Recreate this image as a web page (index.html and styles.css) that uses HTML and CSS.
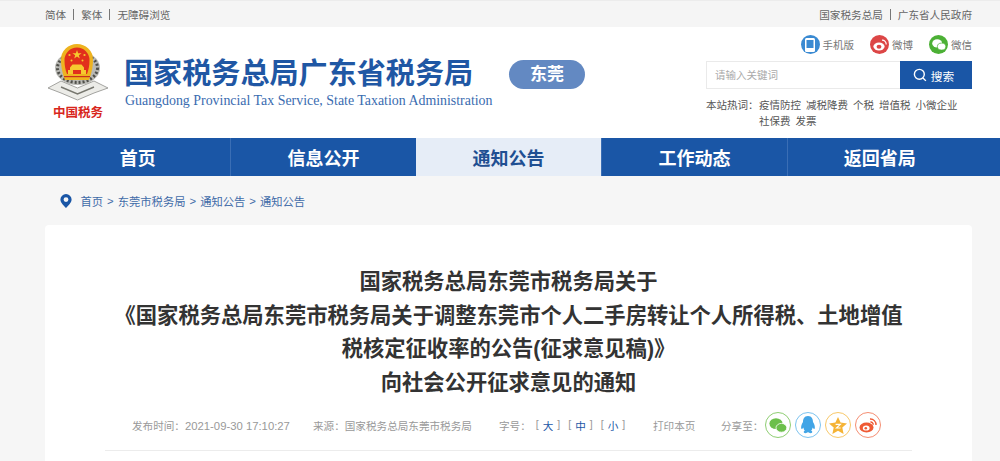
FILE: index.html
```html
<!DOCTYPE html>
<html lang="zh-CN">

<head>
    <meta charset="UTF-8">
    <meta name="viewport" content="width=device-width, initial-scale=1.0">
    <title>国家税务总局广东省税务局</title>
    <link rel="stylesheet" href="styles.css">
</head>

<body>
    <div class="topbar">
        <div class="wrap topbarInner">
            <div class="topLinks">
                <a>简体</a><i></i><a>繁体</a><i></i><a>无障碍浏览</a>
            </div>
            <div class="topLinks">
                <a>国家税务总局</a><i></i><a>广东省人民政府</a>
            </div>
        </div>
    </div>

    <div class="wrap header">
        <div class="logo">
            <svg width="62" height="59" viewBox="0 0 62 59">
                <!-- wreath -->
                <ellipse cx="30.5" cy="24" rx="22.5" ry="17" fill="#b9b9b4" />
                <ellipse cx="30.5" cy="24" rx="20" ry="14.5" fill="none" stroke="#4f4f4a" stroke-width="3" stroke-dasharray="2 2" />
                <!-- ribbon -->
                <path d="M1 44 L14 37 L30.5 44 L47 37 L61 44 L47 49 L30.5 56 L14 49 Z" fill="#ecece8" stroke="#8e8e8a" stroke-width=".8" />
                <path d="M14 43 L30.5 50 L47 43" fill="none" stroke="#77776f" stroke-width="1.4" />
                <!-- emblem -->
                <path d="M30 0 A16 15.5 0 0 1 46 15.5 C46 24 44 31 42 36 H18 C16 31 14 24 14 15.5 A16 15.5 0 0 1 30 0 Z" fill="#eeb31f" />
                <path d="M30 3.5 A12.5 12.5 0 0 1 42.5 16 C42.5 22 41.5 26 40 30 H20 C18.5 26 17.5 22 17.5 16 A12.5 12.5 0 0 1 30 3.5 Z" fill="#e2301c" />
                <path d="M30 6 l1.1 3.3 h3.5 l-2.8 2 1 3.3 -2.8 -2 -2.8 2 1 -3.3 -2.8 -2 h3.5 Z" fill="#f6c92f" />
                <circle cx="22.5" cy="11" r="1.1" fill="#f6c92f" />
                <circle cx="37.5" cy="11" r="1.1" fill="#f6c92f" />
                <circle cx="24.5" cy="16.5" r="1" fill="#f6c92f" />
                <circle cx="35.5" cy="16.5" r="1" fill="#f6c92f" />
                <path d="M23 23.5 L25.5 20.5 H34.5 L37 23.5 V26 H39 V30 H21 V26 H23 Z" fill="#f6c92f" />
                <path d="M26 26 H34 V30 H26 Z" fill="#e2301c" />
                <rect x="17" y="32" width="26" height="1.2" fill="#c9301c" />
            </svg>
            <span class="logoText">中国税务</span>
        </div>
        <div class="siteName">
            <div class="siteCn">国家税务总局广东省税务局</div>
            <div class="siteEn">Guangdong Provincial Tax Service, State Taxation Administration</div>
        </div>
        <div class="cityTag">东莞</div>
        <div class="headRight">
            <div class="social">
                <a><span class="socIcon blue">
                        <svg width="12" height="14" viewBox="0 0 12 14">
                            <rect x="1" y="0" width="10" height="14" rx="1.5" fill="#fff" />
                            <rect x="2.5" y="2" width="7" height="8" fill="#3a8ad2" />
                        </svg></span>手机版</a>
                <a><span class="socIcon red">
                        <svg width="14" height="12" viewBox="0 0 14 12">
                            <ellipse cx="6" cy="7.5" rx="5.6" ry="4" fill="#fff" />
                            <ellipse cx="6" cy="7.8" rx="2.4" ry="2" fill="#dc4646" />
                            <path d="M9 1.2 A4 4 0 0 1 13.2 5.5" fill="none" stroke="#fff" stroke-width="1.2" />
                        </svg></span>微博</a>
                <a><span class="socIcon green">
                        <svg width="14" height="12" viewBox="0 0 14 12">
                            <ellipse cx="5.2" cy="4.4" rx="5" ry="4.2" fill="#fff" />
                            <ellipse cx="9.6" cy="7.6" rx="4.2" ry="3.5" fill="#fff" stroke="#4cb035" stroke-width=".7" />
                        </svg></span>微信</a>
            </div>
            <div class="searchBox">
                <div class="searchInput">请输入关键词</div>
                <div class="searchBtn">
                    <svg width="14" height="14" viewBox="0 0 15 15">
                        <circle cx="6.8" cy="6.8" r="5.3" fill="none" stroke="#fff" stroke-width="1.5" />
                        <path d="M10.7 10.7 L13.8 13.8" stroke="#fff" stroke-width="1.5" />
                    </svg>
                    搜索
                </div>
            </div>
            <div class="hotWords">
                <span class="hotLabel">本站热词：</span>
                <div class="hotList">
                    <a>疫情防控</a><a>减税降费</a><a>个税</a><a>增值税</a><a>小微企业</a><a>社保费</a><a>发票</a>
                </div>
            </div>
        </div>
    </div>

    <div class="nav">
        <div class="wrap navInner">
            <a class="navItem">首页</a>
            <a class="navItem">信息公开</a>
            <a class="navItem active">通知公告</a>
            <a class="navItem">工作动态</a>
            <a class="navItem">返回省局</a>
        </div>
    </div>

    <div class="wrap crumb">
        <svg width="12" height="14" viewBox="0 0 12 15">
            <path fill-rule="evenodd" d="M6 0 A6 6 0 0 1 12 6 C12 9.5 8 13 6 15 C4 13 0 9.5 0 6 A6 6 0 0 1 6 0 Z M6 3.4 A2.6 2.6 0 1 0 6 8.6 A2.6 2.6 0 1 0 6 3.4 Z" fill="#1a56a6" />
        </svg>
        <div class="crumbLinks">
            <a>首页</a><b>&gt;</b><a>东莞市税务局</a><b>&gt;</b><a>通知公告</a><b>&gt;</b><a>通知公告</a>
        </div>
    </div>

    <div class="wrap">
        <div class="card">
            <h1 class="title">
                国家税务总局东莞市税务局关于<br>
                《国家税务总局东莞市税务局关于调整东莞市个人二手房转让个人所得税、土地增值<br>
                税核定征收率的公告(征求意见稿)》<br>
                向社会公开征求意见的通知
            </h1>
            <div class="meta">
                <span class="metaPub">发布时间：<span class="metaTime">2021-09-30 17:10:27</span></span>
                <span class="metaSrc">来源：国家税务总局东莞市税务局</span>
                <span class="metaSize">字号：<span class="sizeBtn"><em>[</em><a>大</a><em>]</em></span><span class="sizeBtn"><em>[</em><a>中</a><em>]</em></span><span class="sizeBtn"><em>[</em><a>小</a><em>]</em></span></span>
                <span class="metaPrint">打印本页</span>
                <span class="metaShare">分享至：</span>
                <div class="shares">
                    <span class="share sWx">
                        <svg width="18" height="15" viewBox="0 0 18 15">
                            <ellipse cx="7" cy="5.6" rx="6.6" ry="5.4" fill="#6cbf4b" />
                            <ellipse cx="12.4" cy="9.8" rx="5.4" ry="4.4" fill="#6cbf4b" stroke="#fff" stroke-width=".8" />
                        </svg>
                    </span>
                    <span class="share sQq">
                        <svg width="16" height="18" viewBox="0 0 16 18">
                            <path d="M8 0 C12 0 13 3.5 13 6 C14.5 8.5 15.5 11 14.5 13 C13.8 13 13 12 12.6 11.4 C12.4 13 11.8 14 11 14.6 C12.2 15.2 12.6 16 12 16.8 C10.5 17.6 9 17 8 16 C7 17 5.5 17.6 4 16.8 C3.4 16 3.8 15.2 5 14.6 C4.2 14 3.6 13 3.4 11.4 C3 12 2.2 13 1.5 13 C.5 11 1.5 8.5 3 6 C3 3.5 4 0 8 0 Z" fill="#42a5e6" />
                        </svg>
                    </span>
                    <span class="share sQz">
                        <svg width="18" height="17" viewBox="0 0 18 17">
                            <path d="M9 0 L11.6 5.6 L18 6.4 L13.3 10.6 L14.6 17 L9 13.8 L3.4 17 L4.7 10.6 L0 6.4 L6.4 5.6 Z" fill="#f5b335" />
                            <path d="M6.6 7.4 H11.4 L7.4 11 H11.6" fill="none" stroke="#fff" stroke-width="1.1" />
                        </svg>
                    </span>
                    <span class="share sWb">
                        <svg width="18" height="15" viewBox="0 0 18 15">
                            <ellipse cx="7.5" cy="9.5" rx="7" ry="5" fill="#ef5a34" />
                            <ellipse cx="7.2" cy="10" rx="3.4" ry="2.6" fill="#fff" />
                            <circle cx="6.8" cy="10.2" r="1.3" fill="#ef5a34" />
                            <path d="M11 1 A5.6 5.6 0 0 1 17 7 M11.4 4 A2.6 2.6 0 0 1 14.2 6.8" fill="none" stroke="#ef5a34" stroke-width="1.4" />
                        </svg>
                    </span>
                </div>
            </div>
        </div>
    </div>
</body>

</html>
```

FILE: styles.css
```css
* {
    box-sizing: border-box;
}

html,
body {
    margin: 0;
    height: 461px;
    overflow: hidden;
}

body {
    background: #f6f6f6;
    font-family: "Liberation Sans", "Noto Sans CJK SC", sans-serif;
    color: #555;
}

.wrap {
    padding: 0 28px 0 45px;
}

.topbar {
    height: 27px;
    background: #f5f5f5;
    border-top: 1px solid #ececec;
    font-size: 10.6px;
    color: #666;
}

.topbarInner {
    height: 26px;
    display: flex;
    justify-content: space-between;
    align-items: center;
}

.topLinks {
    display: flex;
    align-items: center;
}

.topLinks i {
    width: 1px;
    height: 11px;
    margin: 0 7px;
    background: #777;
}

.header {
    height: 111px;
    background: #fff;
    display: flex;
}

.logo {
    width: 62px;
    margin: 17px 0 0 2px;
    flex: none;
    display: flex;
    flex-direction: column;
    align-items: center;
}

.logoText {
    font-family: "Noto Sans CJK SC", sans-serif;
    font-size: 12.5px;
    line-height: 18px;
    font-weight: 700;
    color: #d8261c;
    white-space: nowrap;
}

.siteName {
    margin: 27px 0 0 15px;
    width: 385px;
    flex: none;
}

.siteCn {
    font-family: "Noto Sans CJK SC", sans-serif;
    font-size: 29.1px;
    line-height: 34px;
    font-weight: 700;
    color: #1f57a4;
    white-space: nowrap;
}

.siteEn {
    margin: 5px 0 0 1px;
    font-family: "Liberation Serif", serif;
    font-size: 13.9px;
    line-height: 15px;
    color: #3a6cb0;
    white-space: nowrap;
}

.cityTag {
    width: 76px;
    height: 29px;
    margin-top: 33px;
    border-radius: 15px;
    background: #6389c2;
    color: #fff;
    font-size: 17px;
    font-weight: 700;
    line-height: 29px;
    text-align: center;
    flex: none;
}

.headRight {
    margin-left: auto;
    width: 266px;
    flex: none;
    font-size: 10.5px;
}

.social {
    height: 34px;
    padding-top: 8px;
    display: flex;
    justify-content: flex-end;
    gap: 16px;
    color: #777;
}

.social a {
    display: flex;
    align-items: center;
    height: 19px;
}

.socIcon {
    width: 19px;
    height: 19px;
    border-radius: 50%;
    margin-right: 3px;
    display: flex;
    align-items: center;
    justify-content: center;
}

.blue {
    background: #3a8ad2;
}

.red {
    background: #dc4646;
}

.green {
    background: #4cb035;
}

.searchBox {
    display: flex;
    height: 28px;
    border: 1px solid #eaeaea;
    border-right: 0;
}

.searchInput {
    flex: 1;
    padding-left: 8px;
    line-height: 26px;
    color: #aaa;
}

.searchBtn {
    width: 72px;
    margin: -1px 0;
    padding-right: 5px;
    background: #1a56a6;
    color: #fff;
    font-size: 11.7px;
    display: flex;
    align-items: center;
    justify-content: center;
    gap: 4px;
}

.hotWords {
    margin-top: 8px;
    display: flex;
    line-height: 16px;
    color: #555;
}

.hotLabel {
    width: 53px;
    flex: none;
    white-space: nowrap;
}

.hotList {
    display: flex;
    flex-wrap: wrap;
    column-gap: 5px;
}

.nav {
    height: 38px;
    background: #1a56a6;
}

.navInner {
    display: flex;
}

.navItem {
    width: 185.6px;
    height: 38px;
    line-height: 42px;
    text-align: center;
    font-size: 18px;
    font-weight: 700;
    color: #fff;
    border-left: 1px solid #3a6eb5;
}

.navItem:first-child {
    border-left: 0;
}

.navItem.active {
    background: #e6edf7;
    color: #1f4f92;
    border-left: 0;
}

.crumb {
    height: 49px;
    padding-left: 60px;
    display: flex;
    align-items: center;
    gap: 8.5px;
}

.crumbLinks {
    font-size: 11.3px;
    color: #3f6ba8;
    display: flex;
    align-items: center;
}

.crumbLinks b {
    margin: 0 4px;
    font-weight: 400;
}

.card {
    height: 236px;
    background: #fff;
    border-radius: 4px 4px 0 0;
    padding-top: 41px;
}

.title {
    margin: 0;
    text-align: center;
    font-size: 21.3px;
    line-height: 33.7px;
    font-weight: 700;
    color: #333;
}

.meta {
    margin: 0 60px;
    height: 50px;
    padding-left: 27px;
    display: flex;
    align-items: center;
    font-size: 10.6px;
    color: #999;
    border-bottom: 1px solid #ececec;
    white-space: nowrap;
}

.metaPub {
    width: 181px;
}

.metaTime {
    font-size: 11.3px;
}

.metaSrc {
    width: 186px;
}

.metaSize {
    width: 154px;
    display: flex;
}

.sizeBtn {
    margin-left: 5px;
    margin-right: 3px;
    display: flex;
}

.sizeBtn em {
    font-style: normal;
}

.sizeBtn a {
    margin: 0 4px;
    color: #1a56a6;
}

.metaPrint {
    width: 68px;
}

.metaShare {
    width: 44px;
}

.shares {
    display: flex;
    gap: 4px;
}

.share {
    width: 26px;
    height: 26px;
    border-radius: 50%;
    border: 1px solid;
    display: flex;
    align-items: center;
    justify-content: center;
}

.sWx {
    border-color: #8fce73;
}

.sQq {
    border-color: #7cc3ef;
}

.sQz {
    border-color: #f8c869;
}

.sWb {
    border-color: #f58e72;
}
```
